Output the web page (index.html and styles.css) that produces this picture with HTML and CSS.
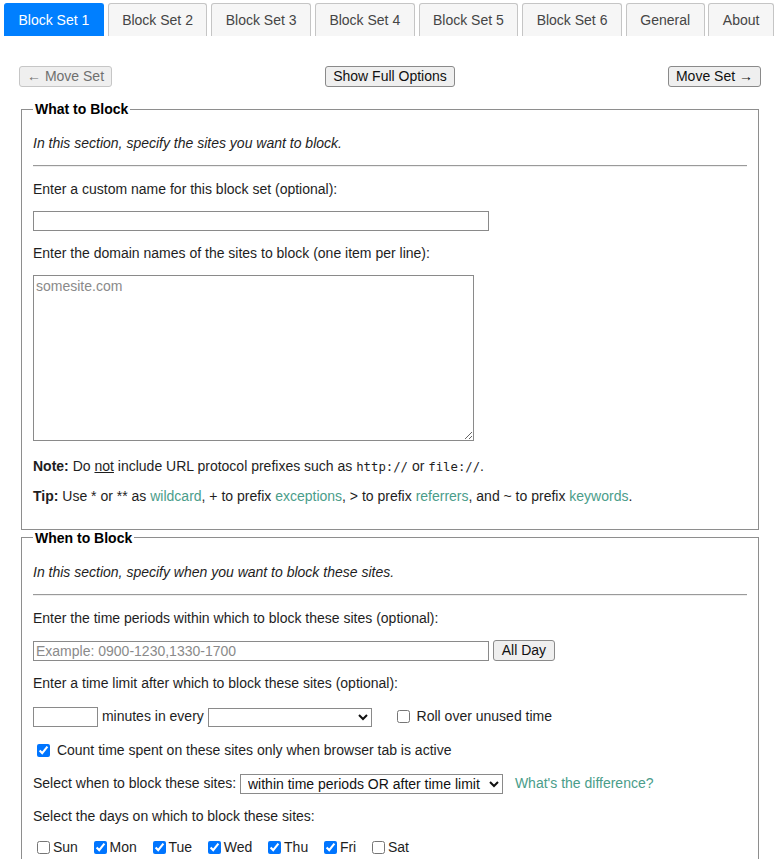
FILE: index.html
```html
<!DOCTYPE html>
<html lang="en">
<head>
<meta charset="utf-8">
<title>LeechBlock Options</title>
<link rel="stylesheet" href="styles.css">
</head>
<body>
<div class="tabs">
  <ul class="tab-nav">
    <li class="tab tab-active">Block Set 1</li>
    <li class="tab">Block Set 2</li>
    <li class="tab">Block Set 3</li>
    <li class="tab">Block Set 4</li>
    <li class="tab">Block Set 5</li>
    <li class="tab">Block Set 6</li>
    <li class="tab">General</li>
    <li class="tab">About</li>
  </ul>
  <div class="panel">
    <div class="toolbar">
      <button class="btn" disabled>&larr; Move Set</button>
      <button class="btn btn-wide">Show Full Options</button>
      <button class="btn">Move Set &rarr;</button>
    </div>

    <fieldset class="group group-sites">
      <legend class="group-title">What to Block</legend>
      <p class="intro">In this section, specify the sites you want to block.</p>
      <hr class="rule">
      <p class="line">Enter a custom name for this block set (optional):</p>
      <p class="line"><input type="text" class="field field-long"></p>
      <p class="line">Enter the domain names of the sites to block (one item per line):</p>
      <p class="line"><textarea class="sites" placeholder="somesite.com"></textarea></p>
      <p class="line"><b>Note:</b> Do <u>not</u> include URL protocol prefixes such as <code class="code">http://</code> or <code class="code">file://</code>.</p>
      <p class="line"><b>Tip:</b> Use * or ** as <a class="link" href="#">wildcard</a>, + to prefix <a class="link" href="#">exceptions</a>, &gt; to prefix <a class="link" href="#">referrers</a>, and ~ to prefix <a class="link" href="#">keywords</a>.</p>
    </fieldset>

    <fieldset class="group">
      <legend class="group-title">When to Block</legend>
      <p class="intro">In this section, specify when you want to block these sites.</p>
      <hr class="rule">
      <p class="line">Enter the time periods within which to block these sites (optional):</p>
      <p class="line"><input type="text" class="field field-long" placeholder="Example: 0900-1230,1330-1700"> <button class="btn btn-small">All Day</button></p>
      <p class="line">Enter a time limit after which to block these sites (optional):</p>
      <p class="line line-limit"><input type="text" class="field field-short"> minutes in every <select class="choice choice-period"><option></option></select><label class="check rollover"><input type="checkbox" class="box"> Roll over unused time</label></p>
      <p class="line"><label class="check"><input type="checkbox" class="box" checked> Count time spent on these sites only when browser tab is active</label></p>
      <p class="line">Select when to block these sites: <select class="choice choice-mode"><option>within time periods OR after time limit</option></select> <a class="link diff" href="#">What's the difference?</a></p>
      <p class="line">Select the days on which to block these sites:</p>
      <p class="line days">
        <label class="check day"><input type="checkbox" class="box">Sun</label>
        <label class="check day"><input type="checkbox" class="box" checked>Mon</label>
        <label class="check day"><input type="checkbox" class="box" checked>Tue</label>
        <label class="check day"><input type="checkbox" class="box" checked>Wed</label>
        <label class="check day"><input type="checkbox" class="box" checked>Thu</label>
        <label class="check day"><input type="checkbox" class="box" checked>Fri</label>
        <label class="check day"><input type="checkbox" class="box">Sat</label>
      </p>
    </fieldset>
  </div>
</div>
</body>
</html>
```

FILE: styles.css
```css
html, body {
  margin: 0;
  padding: 0;
  background: #ffffff;
}

body {
  font-family: "Liberation Sans", Arial, sans-serif;
  font-size: 14px;
  color: #1e1e1e;
}

.tabs {
  padding: 3px 0 0 4px;
}

.tab-nav {
  list-style: none;
  margin: 0;
  padding: 0;
  display: flex;
  gap: 3.8px;
}

.tab {
  height: 33px;
  box-sizing: border-box;
  padding: 0 13.5px;
  line-height: 33px;
  border: 1px solid #c5c5c5;
  border-bottom-width: 0;
  border-radius: 3px 3px 0 0;
  background: #f6f6f6;
  color: #454545;
  white-space: nowrap;
}

.tab-active {
  background: #007fff;
  border-color: #007fff;
  color: #ffffff;
}

.panel {
  padding: 0 20px 0 15px;
}

.toolbar {
  display: flex;
  justify-content: space-between;
  align-items: center;
  margin: 30px 0 14px;
}

.btn {
  font-family: "Liberation Sans", Arial, sans-serif;
  font-size: 14px;
  height: 21px;
  padding: 0 7px;
  border: 1px solid #8a8a8a;
  border-radius: 3px;
  background: #efefef;
  color: #111111;
  line-height: 19px;
}

.btn:disabled {
  color: #6f6f6f;
  border-color: #c6c6c6;
  background: #efefef;
}

.btn-small {
  vertical-align: middle;
  width: 62px;
  padding: 0;
}

.group {
  margin: 0 2px;
  padding: 4.5px 11px 10px;
  border: 1px solid #8e8e8e;
  min-width: 0;
}

.group-sites {
  padding-top: 3.5px;
  padding-bottom: 11px;
}

.group-title {
  padding: 0 2px;
  font-weight: bold;
  color: #000000;
}

.intro {
  font-style: italic;
  margin: 14px 0;
}

.rule {
  margin: 7px 0;
  border: 0;
  border-top: 1px solid #9a9a9a;
  border-bottom: 1px solid #eeeeee;
  height: 0;
}

.line {
  margin: 14px 0;
}

.line-limit {
  margin-top: 16px;
}

.field {
  font-family: "Liberation Sans", Arial, sans-serif;
  font-size: 14px;
  height: 20px;
  box-sizing: border-box;
  padding: 0 2px;
  border: 1px solid #8a8a8a;
  border-radius: 0;
  vertical-align: middle;
  background: #ffffff;
}

.field::placeholder,
.sites::placeholder {
  color: #8a8a8a;
}

.field-long {
  width: 456px;
}

.field-short {
  width: 65px;
}

.sites {
  display: block;
  width: 441px;
  height: 166px;
  box-sizing: border-box;
  padding: 2px 2px;
  border: 1px solid #8a8a8a;
  font-family: "Liberation Sans", Arial, sans-serif;
  font-size: 14px;
  margin-bottom: 17px;
}

.code {
  font-family: "DejaVu Sans Mono", "Liberation Mono", monospace;
  font-size: 12.3px;
}

.link {
  color: #4a9d8a;
  text-decoration: none;
}

.choice {
  font-family: "Liberation Sans", Arial, sans-serif;
  font-size: 14px;
  height: 19px;
  box-sizing: border-box;
  border: 1px solid #8a8a8a;
  border-radius: 0;
  background: #ffffff;
  padding: 0 0 0 3px;
  vertical-align: middle;
  color: #111111;
}

.choice-period {
  width: 164px;
}

.choice-mode {
  width: 263px;
  height: 20px;
}

.diff {
  margin-left: 8px;
}

.check {
  white-space: nowrap;
}

.box {
  width: 13px;
  height: 13px;
  margin: 3px 3px 3px 4px;
  vertical-align: -2px;
}

.rollover {
  margin-left: 21px;
}

.days {
  display: flex;
  gap: 11.7px;
}
```
